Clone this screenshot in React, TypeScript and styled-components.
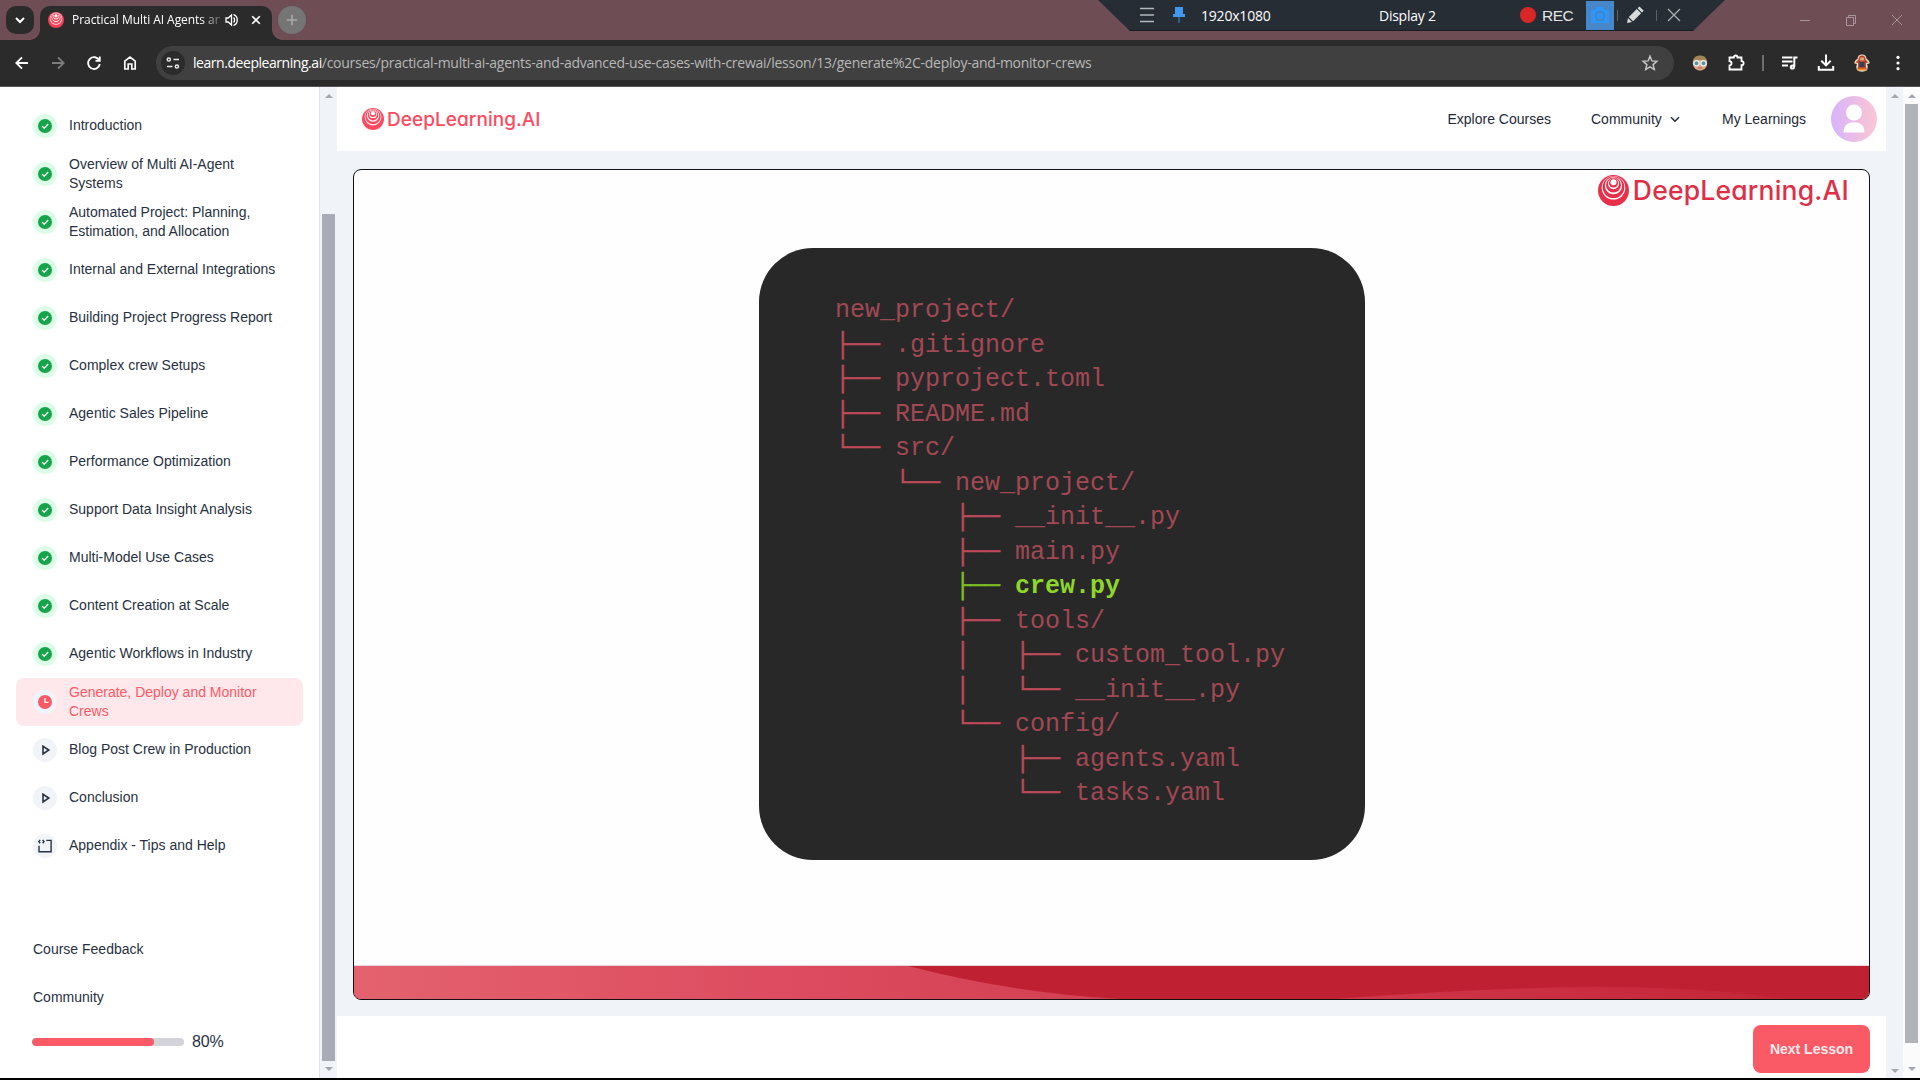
import React from "react";
import styled, { createGlobalStyle, css } from "styled-components";

const Global = createGlobalStyle`
  * { box-sizing: border-box; }
  html, body { margin: 0; padding: 0; }
  body { width: 1920px; height: 1080px; overflow: hidden; background: #000; font-family: "Liberation Sans", Arial, sans-serif; }
  svg { display: block; flex: none; }
`;

const ui = `"Open Sans", "Noto Sans", sans-serif`;

const Screen = styled.div`
  position: relative;
  width: 1920px;
  height: 1080px;
  display: flex;
  flex-direction: column;
  overflow: hidden;
  background: #000;
`;

/* ---------- browser chrome ---------- */
const TabStrip = styled.div`
  height: 40px;
  flex: none;
  display: flex;
  padding: 6px 0 0 6px;
  background: #6f4d55;
`;
const TabSearch = styled.div`
  width: 28px;
  height: 28px;
  border-radius: 10px;
  background: #2b2b2b;
  display: grid;
  place-items: center;
`;
const Tab = styled.div`
  position: relative;
  width: 232px;
  height: 34px;
  margin-left: 6px;
  padding: 0 9px 6px 8px;
  border-radius: 10px 10px 0 0;
  background: #2b2b2b;
  display: flex;
  align-items: center;
  &::before, &::after {
    content: "";
    position: absolute;
    bottom: 0;
    width: 10px;
    height: 10px;
  }
  &::before { left: -10px; background: radial-gradient(circle at 0 0, transparent 9.5px, #2b2b2b 10px); }
  &::after { right: -10px; background: radial-gradient(circle at 100% 0, transparent 9.5px, #2b2b2b 10px); }
`;
const TabTitle = styled.div`
  width: 148px;
  margin: 0 5px 0 8px;
  white-space: nowrap;
  font: 12px/18px ${ui};
  letter-spacing: -0.05px;
  color: #fff;
  mask-image: linear-gradient(90deg, #000 128px, transparent 154px);
`;
const TabClose = styled.div`
  margin-left: 12px;
`;
const NewTab = styled.div`
  width: 28px;
  height: 28px;
  margin-left: 6px;
  border-radius: 50%;
  background: #757575;
  display: grid;
  place-items: center;
`;
const WindowButtons = styled.div`
  margin-left: auto;
  padding: 6px 15px 0 0;
  display: flex;
  gap: 30px;
  align-items: flex-start;
`;

const Recorder = styled.div`
  position: absolute;
  top: 0;
  left: 1098px;
  width: 627px;
  height: 31px;
  padding: 1px 43px 1px 41px;
  display: flex;
  align-items: center;
  background: #262d35;
  clip-path: polygon(0 0, 100% 0, 595px 100%, 32px 100%);
  border-bottom: 1px solid #171b22;
  color: #fff;
  font: 14px/20px ${ui};
`;
const RecResolution = styled.span`
  width: 178px;
  margin-left: 15px;
  padding-top: 1px;
  letter-spacing: -0.2px;
`;
const RecDisplay = styled.span`
  width: 141px;
  letter-spacing: -0.25px;
  padding-top: 2px;
`;
const RecDot = styled.i`
  width: 16px;
  height: 16px;
  border-radius: 50%;
  background: #d92727;
`;
const RecLabel = styled.span`
  width: 44px;
  margin-left: 6px;
  padding-top: 1px;
  font: 15.5px/20px "Liberation Sans", Arial, sans-serif;
  color: #e4e6e8;
  letter-spacing: -0.5px;
`;
const CameraButton = styled.div`
  width: 28px;
  height: 29px;
  background: #4587c9;
  display: grid;
  place-items: center;
`;
const RecDivider = styled.i`
  width: 1px;
  height: 11px;
  background: #5b626a;
`;

const Toolbar = styled.div`
  height: 47px;
  flex: none;
  display: flex;
  align-items: center;
  padding: 0 12px 1px 12px;
  background: #2b2b2b;
  border-bottom: 1px solid #5a5657;
`;
const NavIcons = styled.div`
  width: 144px;
  flex: none;
  display: flex;
  gap: 16px;
`;
const Address = styled.div`
  width: 1518px;
  flex: none;
  height: 34px;
  padding: 0 14px 0 5px;
  border-radius: 17px;
  background: #404040;
  display: flex;
  align-items: center;
  font: 14px/20px ${ui};
  color: #b7b7b7;
`;
const SiteInfo = styled.div`
  width: 24px;
  height: 24px;
  border-radius: 50%;
  background: #2b2b2b;
  display: grid;
  place-items: center;
`;
const Url = styled.div`
  margin-left: 8px;
  flex: 1;
  white-space: nowrap;
  letter-spacing: -0.255px;
  b { color: #fff; font-weight: 400; letter-spacing: -0.45px; }
`;
const Actions = styled.div`
  flex: none;
  display: flex;
  align-items: center;
  padding-left: 16px;
`;
const Action = styled.div<{ $w: number }>`
  width: ${(p) => p.$w}px;
  flex: none;
  height: 24px;
  display: grid;
  place-items: center;
`;
const ActionRule = styled.i`
  width: 2px;
  height: 16px;
  background: #6e6e6e;
`;

/* ---------- page ---------- */
const Page = styled.div`
  height: 991px;
  flex: none;
  display: flex;
  background: #f0f4f9;
`;
const Sidebar = styled.aside`
  width: 320px;
  flex: none;
  padding: 15px 16px 0;
  background: #fff;
  border-right: 1px solid #dfe2e8;
  color: #273142;
  font-size: 14px;
  line-height: 19px;
`;
const Lesson = styled.div<{ $active?: boolean }>`
  width: 287px;
  height: 48px;
  padding: 0 20px 0 17px;
  display: flex;
  align-items: center;
  gap: 12px;
  border-radius: 8px;
  ${(p) => p.$active && css`background: #ffe8eb; color: #f95a66;`}
`;
const Badge = styled.span<{ $tone: "done" | "idle" }>`
  width: 24px;
  height: 24px;
  flex: none;
  border-radius: 50%;
  display: grid;
  place-items: center;
  background: ${(p) => (p.$tone === "done" ? "#dcfce7" : "#f0f4f9")};
`;
const LessonName = styled.span`
  width: 220px;
  padding-bottom: 1px;
`;
const SideLinks = styled.div`
  padding: 55px 0 0 17px;
  display: grid;
  grid-auto-rows: 48px;
  align-items: center;
`;
const Progress = styled.div`
  margin: 8px 0 0 16px;
  height: 24px;
  display: flex;
  align-items: center;
  gap: 8px;
  font-size: 16px;
  letter-spacing: -0.2px;
`;
const Track = styled.div`
  width: 152px;
  height: 8px;
  margin-top: 1px;
  border-radius: 4px;
  overflow: hidden;
  background: #d2d4d9;
`;
const Fill = styled.div`
  width: 80%;
  height: 8px;
  border-radius: 4px;
  background: #f95a66;
`;

const Scrollbar = styled.div<{ $bg: string; $top: number; $bottom: number }>`
  width: 17px;
  flex: none;
  height: 991px;
  padding: ${(p) => p.$top}px 0 ${(p) => p.$bottom}px;
  display: flex;
  flex-direction: column;
  align-items: center;
  background: ${(p) => p.$bg};
`;
const Thumb = styled.div<{ $gap: number; $h: number; $c: string }>`
  width: 13px;
  height: ${(p) => p.$h}px;
  margin-top: ${(p) => p.$gap}px;
  background: ${(p) => p.$c};
`;
const Arrow = styled.i<{ $down?: boolean }>`
  width: 0;
  height: 0;
  border: 4px solid transparent;
  ${(p) => p.$down
    ? css`margin-top: auto; border-top-color: #a3a7ae; border-bottom: 0;`
    : css`border-bottom-color: #a3a7ae; border-top: 0;`}
`;

const Main = styled.main`
  width: 1549px;
  flex: none;
  display: flex;
  flex-direction: column;
`;
const Header = styled.header`
  height: 64px;
  padding: 0 9px 0 25px;
  display: flex;
  align-items: center;
  justify-content: space-between;
  background: #fff;
`;
const Brand = styled.div<{ $size: number; $gap: number; $track: number; $color: string }>`
  display: flex;
  align-items: center;
  gap: ${(p) => p.$gap}px;
  white-space: nowrap;
  font: 500 ${(p) => p.$size}px/1 Inter, "Open Sans", sans-serif;
  font-feature-settings: "cv11" 1, "ss03" 1;
  letter-spacing: ${(p) => p.$track}px;
  color: ${(p) => p.$color};
`;
const Nav = styled.nav`
  display: flex;
  align-items: center;
  font-size: 14px;
  color: #1d2939;
`;
const NavItem = styled.span<{ $w: number }>`
  width: ${(p) => p.$w}px;
  display: flex;
  align-items: center;
  gap: 8px;
  white-space: nowrap;
`;
const VideoArea = styled.div`
  height: 865px;
  padding: 18px 16px 16px;
`;
const Video = styled.div`
  width: 1517px;
  height: 831px;
  border: 1px solid #111;
  border-radius: 8px;
  overflow: hidden;
  background: #fefefe;
  display: flex;
  flex-direction: column;
  align-items: center;
`;
const VideoTop = styled.div`
  width: 100%;
  height: 78px;
  padding: 5px 20px 0 0;
  display: flex;
  justify-content: flex-end;
  align-items: flex-start;
`;
const CodeCard = styled.div`
  width: 606px;
  height: 612px;
  margin-right: 99px;
  padding: 46px 0 0 76px;
  border-radius: 54px;
  background: #282828;
`;
const TreeLine = styled.pre<{ $hot?: boolean }>`
  margin: 0;
  height: 34.5px;
  font: ${(p) => (p.$hot ? 700 : 400)} 25px/34.5px "Liberation Mono", "Courier New", monospace;
  color: ${(p) => (p.$hot ? "#8fd62c" : "#a14854")};
  span {
    font-weight: 400;
    color: ${(p) => (p.$hot ? "#7dbd22" : "#bd4a58")};
    -webkit-text-stroke: 0.5px ${(p) => (p.$hot ? "#7dbd22" : "#bd4a58")};
  }
`;
const Wave = styled.div`
  margin-top: auto;
  height: 34px;
`;
const Footer = styled.footer`
  height: 62px;
  padding: 9px 16px 0;
  display: flex;
  justify-content: flex-end;
  background: #fff;
`;
const NextButton = styled.button`
  width: 117px;
  height: 48px;
  padding: 0;
  border: 0;
  border-radius: 8px;
  background: #f95a66;
  color: #ffe9ec;
  font: 700 14px/20px "Liberation Sans", Arial, sans-serif;
`;

const Logo = ({ size, color }: { size: number; color: string }) => (
  <svg width={size} height={size} viewBox="0 0 32 32">
    <circle cx="16" cy="16" r="16" fill={color} />
    <circle cx="16" cy="13.2" r="12.2" fill="#fff" />
    <circle cx="16" cy="12.6" r="11.2" fill={color} />
    <circle cx="16" cy="11" r="8.9" fill="#fff" />
    <circle cx="16" cy="10.3" r="7.7" fill={color} />
    <circle cx="16" cy="9" r="5.7" fill="#fff" />
    <circle cx="16" cy="8.3" r="4.7" fill={color} />
    <circle cx="16" cy="7.5" r="3.1" fill="#fff" />
  </svg>
);

type Stroke = { d: string; size?: number; c?: string; w?: number; box?: number; fill?: string };
const Icon = ({ d, size = 20, c = "#fff", w = 1.8, box = 20, fill = "none" }: Stroke) => (
  <svg width={size} height={size} viewBox={`0 0 ${box} ${box}`} fill={fill} stroke={c} strokeWidth={w}>
    <path d={d} />
  </svg>
);

const Check = () => (
  <svg width="14" height="14" viewBox="0 0 14 14">
    <circle cx="7" cy="7" r="7" fill="#16a34a" />
    <path d="M4 7.1 6.2 9.2 10.2 5" fill="none" stroke="#e8fff0" strokeWidth="1.4" />
  </svg>
);
const Clock = () => (
  <svg width="14" height="14" viewBox="0 0 14 14">
    <circle cx="7" cy="7" r="7" fill="#f95a66" />
    <path d="M7 3v4.4h3.6" fill="none" stroke="#ffeef0" strokeWidth="1.4" />
  </svg>
);
const Play = () => <Icon size={14} box={14} c="#273142" w={1.6} d="M5 3.3v7.6L10.8 7z" />;
const CodeBlock = () => (
  <Icon size={14} box={14} c="#273142" w={1.4} d="M2.2 1 .8 2.6l1.4 1.6M4.6 1 6 2.6 4.6 4.2M8.3 1.4h4.8v11.4H1V6.8" />
);

const icons = { done: Check, now: Clock, play: Play, code: CodeBlock };
const lessons: [string, keyof typeof icons][] = [
  ["Introduction", "done"],
  ["Overview of Multi AI-Agent Systems", "done"],
  ["Automated Project: Planning, Estimation, and Allocation", "done"],
  ["Internal and External Integrations", "done"],
  ["Building Project Progress Report", "done"],
  ["Complex crew Setups", "done"],
  ["Agentic Sales Pipeline", "done"],
  ["Performance Optimization", "done"],
  ["Support Data Insight Analysis", "done"],
  ["Multi-Model Use Cases", "done"],
  ["Content Creation at Scale", "done"],
  ["Agentic Workflows in Industry", "done"],
  ["Generate, Deploy and Monitor Crews", "now"],
  ["Blog Post Crew in Production", "play"],
  ["Conclusion", "play"],
  ["Appendix - Tips and Help", "code"],
];

const tree: [string, string][] = [
  ["", "new_project/"],
  ["├── ", ".gitignore"],
  ["├── ", "pyproject.toml"],
  ["├── ", "README.md"],
  ["└── ", "src/"],
  ["    └── ", "new_project/"],
  ["        ├── ", "__init__.py"],
  ["        ├── ", "main.py"],
  ["        ├── ", "crew.py"],
  ["        ├── ", "tools/"],
  ["        │   ├── ", "custom_tool.py"],
  ["        │   └── ", "__init__.py"],
  ["        └── ", "config/"],
  ["            ├── ", "agents.yaml"],
  ["            └── ", "tasks.yaml"],
];

export default function App() {
  return (
    <Screen>
      <Global />
      <TabStrip>
        <TabSearch><Icon size={12} box={12} w={2} d="M2 4l4 4 4-4" /></TabSearch>
        <Tab>
          <Logo size={16} color="#f5405a" />
          <TabTitle>Practical Multi AI Agents an</TabTitle>
          <svg width="14" height="14" viewBox="0 0 14 14" fill="none" stroke="#fff" strokeWidth="1.3">
            <path d="M1 5h2.2L6.5 2v10L3.2 9H1z" />
            <path d="M8.5 4.6c1.5 1 1.5 3.8 0 4.8M8.5 1.6c5 1.5 5 9.3 0 10.8" />
          </svg>
          <TabClose><Icon size={10} box={10} w={1.6} d="M1.2 1.2l7.6 7.6M8.8 1.2l-7.6 7.6" /></TabClose>
        </Tab>
        <NewTab><Icon size={12} box={12} c="#a9a9a9" w={1.6} d="M6 .8v10.4M.8 6h10.4" /></NewTab>
        <WindowButtons>
          <Icon size={16} box={16} c="#a8949a" w={1} d="M3 8.5h10" />
          <Icon size={16} box={16} c="#a8949a" w={1} d="M3.5 5.5h7v8h-7zM5.5 5.5v-2h7v8h-2" />
          <Icon size={16} box={16} c="#a8949a" w={1} d="M3 3l10 10M13 3L3 13" />
        </WindowButtons>
      </TabStrip>
      <Recorder>
        <Icon size={16} box={16} c="#b3b8bd" w={1.5} d="M1 1.5h14M1 8h14M1 14.5h14" />
        <svg width="14" height="18" viewBox="0 0 14 18" style={{ marginLeft: 17 }}>
          <path d="M3 1h8v7h2v3H1V8h2z" fill="#3f97f0" />
          <path d="M7 11v6" stroke="#2f6ca8" strokeWidth="1.5" />
        </svg>
        <RecResolution>1920x1080</RecResolution>
        <RecDisplay>Display 2</RecDisplay>
        <RecDot />
        <RecLabel>REC</RecLabel>
        <CameraButton>
          <svg width="20" height="18" viewBox="0 0 20 18">
            <path d="M1 4h4l2-3h6l2 3h4v13H1z" fill="#2f96f7" />
            <circle cx="10" cy="10" r="4.2" fill="none" stroke="#3f83c8" strokeWidth="2" />
          </svg>
        </CameraButton>
        <RecDivider style={{ marginLeft: 3 }} />
        <svg width="18" height="18" viewBox="0 0 18 18" style={{ margin: "0 12px 0 8px" }}>
          <path d="M1 17l1-5 4 4zM2.8 11l8-8 4.3 4.3-8 8zM11.6 2.2L13.5.5l4.2 4.2-1.8 1.8z" fill="#d8dadc" />
        </svg>
        <RecDivider />
        <svg width="14" height="14" viewBox="0 0 14 14" style={{ marginLeft: 10 }} stroke="#a9aeb3" strokeWidth="1.3">
          <path d="M1 1l12 12M13 1L1 13" />
        </svg>
      </Recorder>

      <Toolbar>
        <NavIcons>
          <Icon d="M16 10H4.5M10 4.3L4.3 10 10 15.7" />
          <Icon c="#7c7c7c" d="M4 10h11.5M10 4.3l5.7 5.7-5.7 5.7" />
          <Icon d="M15.3 7.5A5.9 5.9 0 1 0 15.8 11M15.8 3.5v4.3h-4.3" />
          <Icon d="M4.8 16V8.2L10 4.1l5.2 4.1V16h-3.4v-5H8.2v5z" w={1.7} />
        </NavIcons>
        <Address>
          <SiteInfo>
            <Icon size={14} box={14} c="#e6e6e6" w={1.5} d="M7.5 3.5H13M1 10.5h5.5M1.2 3.5a1.6 1.6 0 1 0 3.2 0 1.6 1.6 0 1 0-3.2 0M9.3 10.5a1.6 1.6 0 1 0 3.2 0 1.6 1.6 0 1 0-3.2 0" />
          </SiteInfo>
          <Url>
            <b>learn.deeplearning.ai</b>/courses/practical-multi-ai-agents-and-advanced-use-cases-with-crewai/lesson/13/generate%2C-deploy-and-monitor-crews
          </Url>
          <Icon c="#c9c9c9" w={1.4} d="M10 3.2l1.9 4.7 5 .4-3.8 3.3 1.2 4.9L10 13.9l-4.3 2.6 1.2-4.9-3.8-3.3 5-.4z" />
        </Address>
        <Actions>
          <Action $w={20}>
            <svg width="16" height="16" viewBox="0 0 16 16">
              <circle cx="8" cy="8.5" r="7.2" fill="#d9a184" />
              <path d="M.8 7C1 2.5 4.5.5 8 .5S15 2.5 15.2 7L12 5H4z" fill="#a28657" />
              <circle cx="4.5" cy="8.3" r="2.6" fill="#5f8d98" stroke="#e9f5f5" strokeWidth="1.3" />
              <circle cx="11.5" cy="8.3" r="2.6" fill="#5f8d98" stroke="#e9f5f5" strokeWidth="1.3" />
              <path d="M6 13h4" stroke="#b5655a" />
            </svg>
          </Action>
          <Action $w={52}>
            <Icon d="M3.5 4.5h4.3c0-2.7 3.7-2.7 3.7 0h4V8.2c2.8 0 2.8 3.900 0 3.900v4.400h-12v-4c2.700-.3 2.700-4 0-4.300z" />
          </Action>
          <ActionRule />
          <Action $w={52}>
            <Icon w={2} d="M2 4.5h10.5M2 8.5h10.5M2 12.5h6M17.5 4.5h-3.2v9.3M14 14a1.6 1.6 0 1 1-3.2 0 1.6 1.6 0 1 1 3.2 0" />
          </Action>
          <Action $w={20}>
            <Icon w={2} d="M10 1.5v10.5M5.3 7.7L10 12.4l4.7-4.7M2.8 13v3.7h14.4V13" />
          </Action>
          <Action $w={52}>
            <svg width="18" height="18" viewBox="0 0 18 18">
              <path d="M9 .5c3 0 4.5 2 4.5 4.5 2 .5 3.5 3 3 4.5l-2.5.5c1 2 1 5-.5 6.5-2 1.500-7 1.500-9 0C3 15 3 12 4 10l-2.500-.5C1 8 2.500 5.500 4.500 5 4.500 2.500 6 .5 9 .5z" fill="#f3e3d0" />
              <path d="M9 1.500c2.600 0 3.500 1.800 3.500 4l3 3-2.500.5v4l1 2.500H4l1-2.500V9l-2.500-.5 3-3c0-2.200.9-4 3.500-4z" fill="#b5472a" />
              <path d="M7 3.5h4v3H7z" fill="#e2a078" />
              <path d="M6.5 8h5v5h-5z" fill="#33405a" />
              <path d="M5 14.5h8v2H5z" fill="#f08a2c" />
            </svg>
          </Action>
          <Action $w={20}>
            <svg width="4" height="16" viewBox="0 0 4 16" fill="#fff">
              <circle cx="2" cy="2.3" r="1.6" /><circle cx="2" cy="8" r="1.6" /><circle cx="2" cy="13.7" r="1.6" />
            </svg>
          </Action>
        </Actions>
      </Toolbar>

      <Page>
        <Sidebar>
          {lessons.map(([name, kind]) => {
            const Glyph = icons[kind];
            return (
              <Lesson key={name} $active={kind === "now"}>
                <Badge $tone={kind === "done" ? "done" : "idle"}><Glyph /></Badge>
                <LessonName>{name}</LessonName>
              </Lesson>
            );
          })}
          <SideLinks>
            <span>Course Feedback</span>
            <span>Community</span>
          </SideLinks>
          <Progress>
            <Track><Fill /></Track>
            80%
          </Progress>
        </Sidebar>
        <Scrollbar $bg="#f0f4f9" $top={7} $bottom={7}>
          <Arrow />
          <Thumb $gap={116} $h={847} $c="#a8abb5" />
          <Arrow $down />
        </Scrollbar>

        <Main>
          <Header>
            <Brand $size={19} $gap={3} $track={0.05} $color="#fd4a61">
              <Logo size={22} color="#fd4a61" />
              DeepLearning.AI
            </Brand>
            <Nav>
              <NavItem $w={143.5}>Explore Courses</NavItem>
              <NavItem $w={131}>
                Community
                <Icon size={10} box={10} c="#273142" w={1.6} d="M1 3.2l4 4 4-4" />
              </NavItem>
              <NavItem $w={109}>My Learnings</NavItem>
              <svg width="46" height="46" viewBox="0 0 46 46">
                <defs>
                  <linearGradient id="avatar" x1="0" x2="1">
                    <stop offset="0" stopColor="#d7b4fc" />
                    <stop offset="1" stopColor="#fcc6d2" />
                  </linearGradient>
                </defs>
                <circle cx="23" cy="23" r="23" fill="url(#avatar)" />
                <circle cx="23" cy="16.5" r="8" fill="#fff" />
                <path d="M12.5 36.5C12.5 30 16 26.3 23 26.3S33.5 30 33.5 36.5z" fill="#fff" />
              </svg>
            </Nav>
          </Header>
          <VideoArea>
            <Video>
              <VideoTop>
                <Brand $size={26.5} $gap={4} $track={0.2} $color="#dd3048">
                  <Logo size={31} color="#e8304a" />
                  DeepLearning.AI
                </Brand>
              </VideoTop>
              <CodeCard>
                {tree.map(([branch, name], i) => (
                  <TreeLine key={i} $hot={name === "crew.py"}>
                    <span>{branch}</span>{name}
                  </TreeLine>
                ))}
              </CodeCard>
              <Wave>
                <svg width="1515" height="34" viewBox="354 965 1515 34">
                  <defs>
                    <linearGradient id="rose" gradientUnits="userSpaceOnUse" x1="354" x2="1121" y1="0" y2="0">
                      <stop offset="0" stopColor="#e4626f" />
                      <stop offset="0.55" stopColor="#dd4c60" />
                      <stop offset="1" stopColor="#d23f52" />
                    </linearGradient>
                    <linearGradient id="hump" x1="0" x2="1">
                      <stop offset="0" stopColor="#d1364b" />
                      <stop offset="1" stopColor="#c32636" />
                    </linearGradient>
                  </defs>
                  <path d="M354 965h1515v1H354z" fill="#ead3d8" />
                  <path d="M354 966h1515v33H354z" fill="#c02132" />
                  <path d="M354 966H908Q1012 993 1121 999H354z" fill="url(#rose)" />
                  <path d="M1336 999Q1500 987 1600 987T1786 999z" fill="url(#hump)" />
                </svg>
              </Wave>
            </Video>
          </VideoArea>
          <Footer><NextButton>Next Lesson</NextButton></Footer>
        </Main>
        <Scrollbar $bg="#f0f4f9" $top={7} $bottom={5}>
          <Arrow />
          <Arrow $down />
        </Scrollbar>
        <Scrollbar $bg="#fbfbfc" $top={7} $bottom={7}>
          <Arrow />
          <Thumb $gap={6} $h={939} $c="#b0b3b8" />
          <Arrow $down />
        </Scrollbar>
      </Page>
    </Screen>
  );
}
